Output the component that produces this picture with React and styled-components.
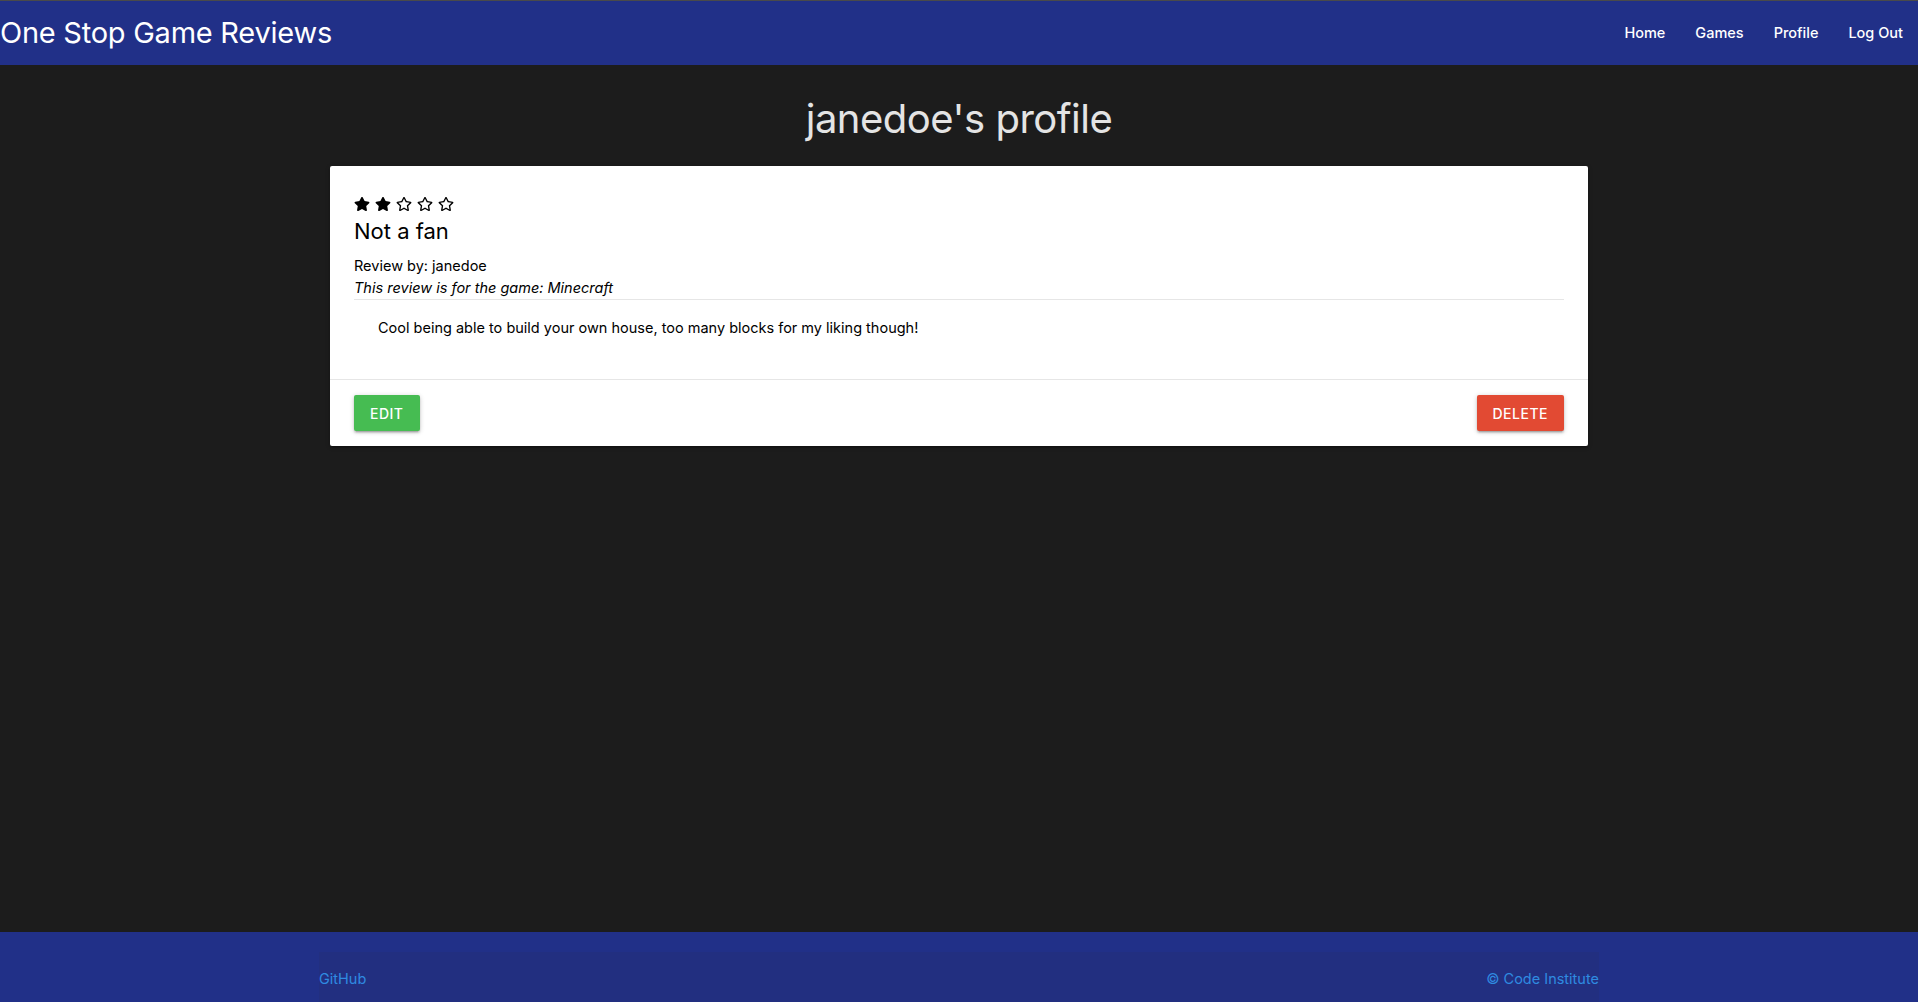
import React from "react";
import styled, { createGlobalStyle } from "styled-components";
import { FaStar, FaRegStar } from "react-icons/fa";

const GlobalStyle = createGlobalStyle`
  html, body { margin: 0; padding: 0; }
  body {
    background: #1c1c1c;
    font-family: Inter, "Open Sans", Roboto, sans-serif;
    color: #000;
  }
  * { box-sizing: border-box; }
`;

const Page = styled.div`
  min-height: 100vh;
  display: flex;
  flex-direction: column;
  border-top: 1px solid #4a4a4a;
`;

const Nav = styled.nav`
  height: 64px;
  background: #213088;
  display: flex;
  align-items: center;
  justify-content: space-between;
`;

const Brand = styled.a`
  color: #fff;
  font-size: 29px;
  font-weight: 400;
  letter-spacing: -0.25px;
  text-decoration: none;
  padding-bottom: 1px;
`;

const NavList = styled.ul`
  list-style: none;
  display: flex;
  margin: 0;
  padding: 0;
`;

const NavLink = styled.a`
  display: block;
  padding: 0 15px;
  color: #fff;
  font-size: 14.5px;
  font-weight: 500;
  text-decoration: none;
  line-height: 66px;
`;

const Main = styled.main`
  flex: 1;
  width: 1280px;
  margin: 0 auto;
  padding: 0 11px;
`;

const Title = styled.h1`
  margin: 0;
  padding: 30px 0 23px;
  text-align: center;
  color: #e4e4e4;
  font-size: 40px;
  font-weight: 400;
  line-height: 48px;
  letter-spacing: -0.5px;
`;

const Card = styled.div`
  background: #fff;
  border-radius: 2px;
  box-shadow: 0 2px 2px 0 rgba(0,0,0,.14), 0 3px 1px -2px rgba(0,0,0,.12), 0 1px 5px 0 rgba(0,0,0,.2);
`;

const CardContent = styled.div`
  padding: 24px 24px 40px;
  border-bottom: 1px solid #e6e6e6;
`;

const Stars = styled.div`
  display: flex;
  gap: 5px;
  font-size: 16px;
  height: 20px;
  align-items: center;
  margin-top: 4px;
`;

const ReviewTitle = styled.h2`
  margin: 2px 0 9px;
  font-size: 22px;
  font-weight: 400;
  line-height: 30px;
`;

const Meta = styled.p`
  margin: 0;
  font-size: 14.5px;
  line-height: 22px;
  font-style: ${(p) => (p.$italic ? "italic" : "normal")};
`;

const Divider = styled.hr`
  border: none;
  border-top: 1px solid #e6e6e6;
  margin: 0;
`;

const Body = styled.p`
  margin: 17px 0 0 24px;
  font-size: 14.5px;
  line-height: 22px;
`;

const CardActions = styled.div`
  display: flex;
  justify-content: space-between;
  padding: 15px 24px 15px;
`;

const Button = styled.button`
  height: 36px;
  padding: 0 16px;
  border: none;
  border-radius: 2px;
  background: ${(p) => p.$bg};
  color: #fff;
  font-family: inherit;
  font-size: 14px;
  font-weight: 500;
  letter-spacing: 0.5px;
  text-transform: uppercase;
  box-shadow: 0 2px 2px 0 rgba(0,0,0,.14), 0 3px 1px -2px rgba(0,0,0,.12), 0 1px 5px 0 rgba(0,0,0,.2);
  cursor: pointer;
`;

const Footer = styled.footer`
  background: #213088;
  padding-top: 20px;
`;

const FooterInner = styled.div`
  width: 1280px;
  margin: 0 auto;
  height: 50px;
  background: #222f80;
  display: flex;
  justify-content: space-between;
  align-items: center;
  padding-top: 2px;
`;

const FooterLink = styled.a`
  color: #2f8be0;
  font-size: 14.5px;
  text-decoration: none;
`;

export default function App() {
  const rating = 2;
  return (
    <>
      <GlobalStyle />
      <Page>
        <Nav>
          <Brand href="#">One Stop Game Reviews</Brand>
          <NavList>
            <li><NavLink href="#">Home</NavLink></li>
            <li><NavLink href="#">Games</NavLink></li>
            <li><NavLink href="#">Profile</NavLink></li>
            <li><NavLink href="#">Log Out</NavLink></li>
          </NavList>
        </Nav>
        <Main>
          <Title>janedoe's profile</Title>
          <Card>
            <CardContent>
              <Stars>
                {[1, 2, 3, 4, 5].map((i) =>
                  i <= rating ? <FaStar key={i} /> : <FaRegStar key={i} />
                )}
              </Stars>
              <ReviewTitle>Not a fan</ReviewTitle>
              <Meta>Review by: janedoe</Meta>
              <Meta $italic>This review is for the game: Minecraft</Meta>
              <Divider />
              <Body>Cool being able to build your own house, too many blocks for my liking though!</Body>
            </CardContent>
            <CardActions>
              <Button $bg="#46bc52">Edit</Button>
              <Button $bg="#e24a33">Delete</Button>
            </CardActions>
          </Card>
        </Main>
        <Footer>
          <FooterInner>
            <FooterLink href="#">GitHub</FooterLink>
            <FooterLink href="#">© Code Institute</FooterLink>
          </FooterInner>
        </Footer>
      </Page>
    </>
  );
}
